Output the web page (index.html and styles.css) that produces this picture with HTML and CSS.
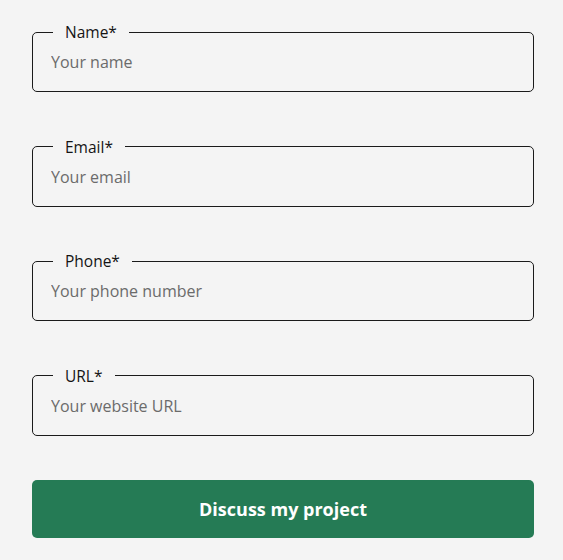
FILE: index.html
```html
<!DOCTYPE html>
<html lang="en">
<head>
<meta charset="utf-8">
<title>Contact form</title>
<link rel="stylesheet" href="styles.css">
</head>
<body>
<form class="form">
  <fieldset class="field">
    <legend class="label">Name*</legend>
    <input class="input" type="text" placeholder="Your name">
  </fieldset>
  <fieldset class="field">
    <legend class="label">Email*</legend>
    <input class="input" type="email" placeholder="Your email">
  </fieldset>
  <fieldset class="field">
    <legend class="label">Phone*</legend>
    <input class="input" type="tel" placeholder="Your phone number">
  </fieldset>
  <fieldset class="field">
    <legend class="label">URL*</legend>
    <input class="input" type="url" placeholder="Your website URL">
  </fieldset>
  <button class="submit" type="button">Discuss my project</button>
</form>
</body>
</html>
```

FILE: styles.css
```css
html, body {
  margin: 0;
  padding: 0;
  background: #f4f4f4;
}
body {
  font-family: "Open Sans", "Liberation Sans", sans-serif;
  color: #141414;
}
.form {
  display: flex;
  flex-direction: column;
  gap: 45.67px;
  padding: 23px 29px 0 32px;
}
.field {
  margin: 0;
  padding: 0;
  border: 1px solid #1a1a1a;
  border-radius: 5px;
  min-width: 0;
}
.label {
  margin-left: 20px;
  padding: 0 12px;
  font-size: 15.5px;
  line-height: 18px;
  color: #141414;
}
.input {
  display: block;
  box-sizing: border-box;
  width: 100%;
  height: 50px;
  margin: 0;
  padding: 0 18px 8px;
  border: 0;
  background: transparent;
  font-family: inherit;
  font-size: 16px;
  line-height: 18px;
  color: #141414;
  outline: none;
}
.input::placeholder {
  color: #6b6b6b;
  opacity: 1;
}
.submit {
  margin-top: -2px;
  height: 58px;
  border: 0;
  border-radius: 5px;
  background: #257b55;
  color: #ffffff;
  font-family: inherit;
  font-size: 18px;
  font-weight: 700;
  cursor: pointer;
}
```
